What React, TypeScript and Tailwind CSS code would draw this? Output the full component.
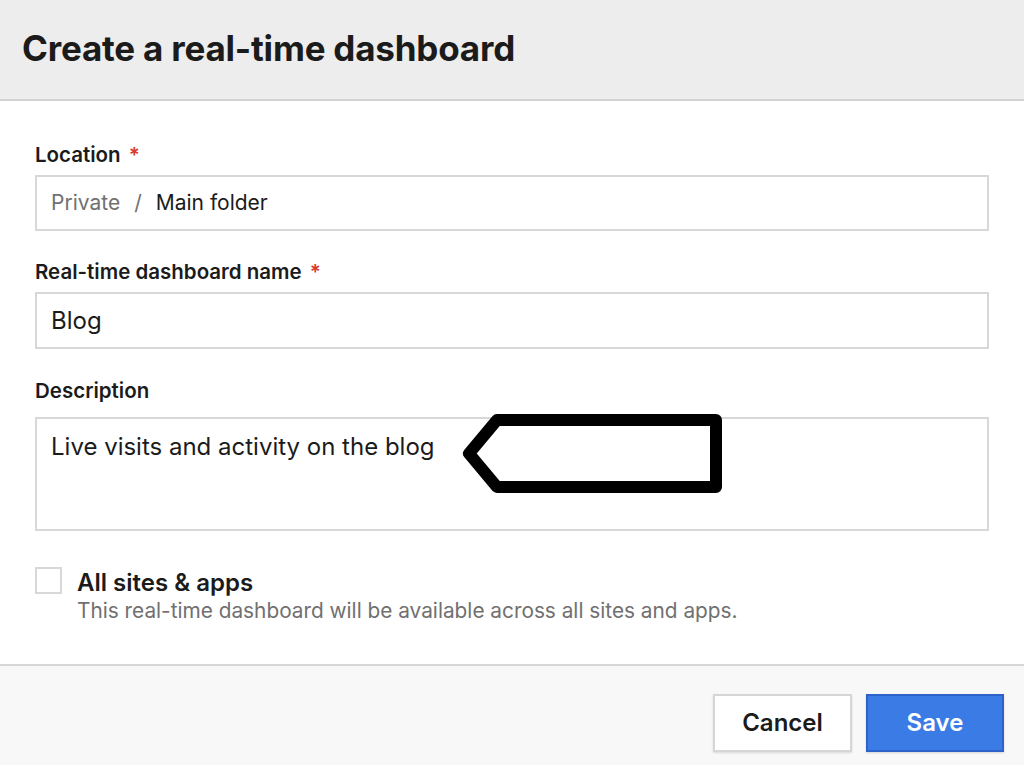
import { useState } from "react";

function Label({ text, required }: { text: string; required?: boolean }) {
  return (
    <div className="text-[20.5px] leading-[24px] font-semibold text-[#1b1b1b]">
      {text}
      {required && <span className="ml-[8px] text-[#d93a2b]">*</span>}
    </div>
  );
}

export default function App() {
  const [allSites, setAllSites] = useState(false);

  return (
    <div className="relative flex h-[765px] w-[1024px] flex-col overflow-hidden bg-white font-['Inter','Liberation_Sans',sans-serif] text-[#1b1b1b]">
      <header className="flex h-[101px] shrink-0 items-center border-b-2 border-[#d2d2d2] bg-[#ededed] px-[22px] pb-[4px]">
        <h1 className="text-[35px] leading-[40px] font-bold tracking-[-0.2px]">
          Create a real-time dashboard
        </h1>
      </header>

      <main className="flex flex-1 flex-col px-[35px] pt-[42px]">
        <Label text="Location" required />
        <div className="mt-[8px] flex h-[56px] items-center border-2 border-[#d8d8d8] px-[14px] text-[21px]">
          <span className="text-[#707070]">Private</span>
          <span className="mx-[14px] text-[#707070]">/</span>
          <span>Main folder</span>
        </div>

        <div className="mt-[29px]">
          <Label text="Real-time dashboard name" required />
        </div>
        <div className="mt-[8px] flex h-[57px] items-center border-2 border-[#d8d8d8] px-[14px] text-[24px]">
          Blog
        </div>

        <div className="mt-[30px]">
          <Label text="Description" />
        </div>
        <div className="mt-[14px] h-[114px] border-2 border-[#d8d8d8] px-[14px] pt-[13px] text-[24px] leading-[30px]">
          Live visits and activity on the blog
        </div>

        <div className="mt-[36px] flex gap-[15px]">
          <button
            type="button"
            onClick={() => setAllSites(!allSites)}
            className="h-[27px] w-[27px] shrink-0 border-2 border-[#d8d8d8] bg-white"
          />
          <div className="pt-[2px]">
            <div className="text-[24px] leading-[28px] font-semibold">All sites &amp; apps</div>
            <div className="text-[20.8px] leading-[28px] text-[#707070]">
              This real-time dashboard will be available across all sites and apps.
            </div>
          </div>
        </div>
      </main>

      <footer className="flex h-[101px] shrink-0 items-start justify-end gap-[14px] border-t-2 border-[#d6d6d6] bg-[#f8f8f8] pt-[28px] pr-[20px]">
        <button
          type="button"
          className="h-[58px] w-[139px] border-2 border-[#d6d6d6] bg-white text-[24px] font-semibold text-[#1b1b1b] shadow-[0_1px_2px_rgba(0,0,0,0.12)]"
        >
          Cancel
        </button>
        <button
          type="button"
          className="h-[58px] w-[138px] border-2 border-[#2d63c8] bg-[#3a7be6] text-[24px] font-semibold text-white shadow-[0_1px_2px_rgba(0,0,0,0.15)]"
        >
          Save
        </button>
      </footer>

      {/* hand-drawn annotation arrow over the description field */}
      <svg
        className="absolute top-[408px] left-[456px]"
        width="272"
        height="92"
        viewBox="0 0 272 92"
        fill="none"
      >
        <path
          d="M41 12 L260 12 L260 79 L41 79 L13 45.5 Z"
          fill="white"
          stroke="black"
          strokeWidth="12"
          strokeLinejoin="round"
        />
      </svg>
    </div>
  );
}
